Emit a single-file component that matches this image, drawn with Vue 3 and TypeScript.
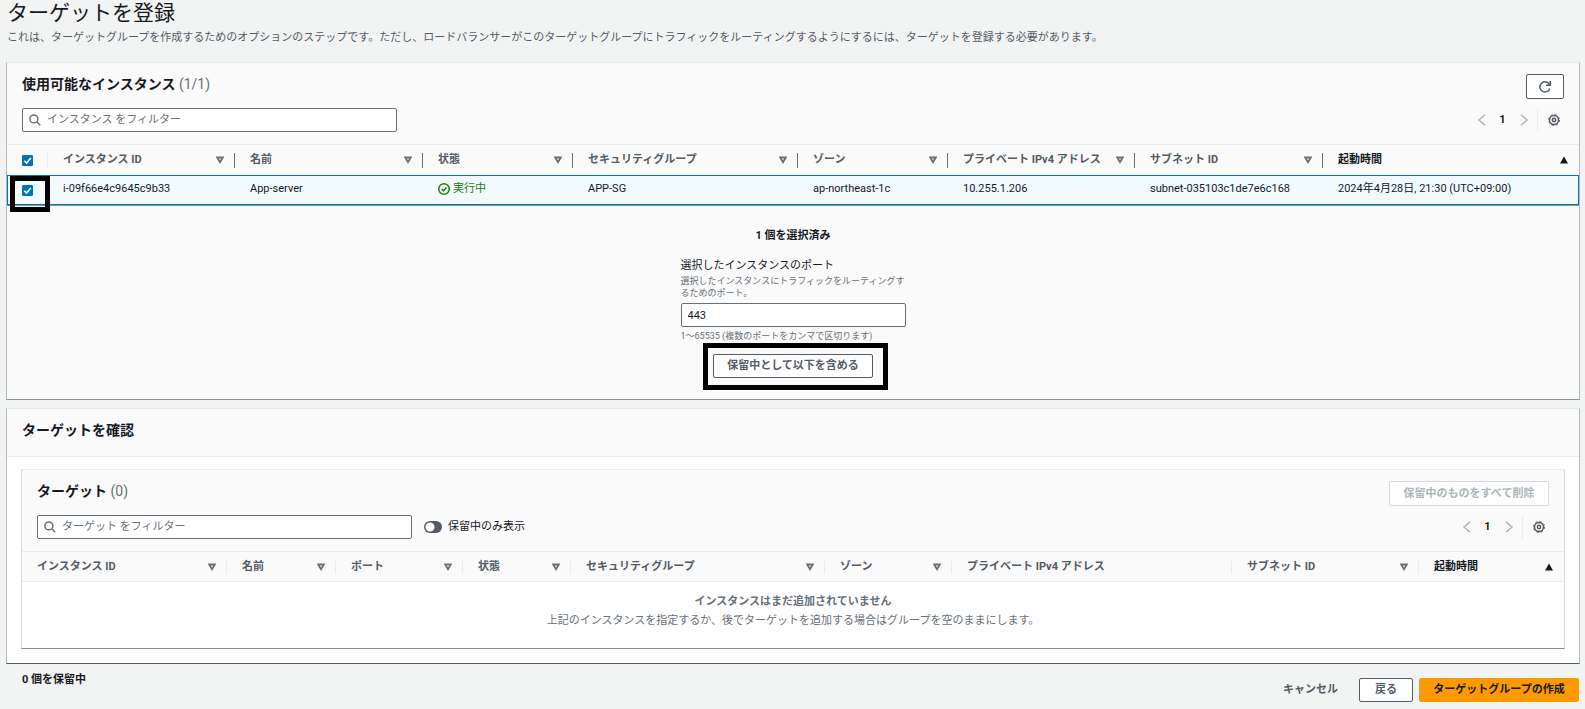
<script setup lang="ts">
import { ref } from 'vue'

interface Column {
  label: string
  width: number | null
  sort: 'none' | 'available' | 'ascending'
}

const instanceColumns: Column[] = [
  { label: 'インスタンス ID', width: 187, sort: 'available' },
  { label: '名前', width: 188, sort: 'available' },
  { label: '状態', width: 150, sort: 'available' },
  { label: 'セキュリティグループ', width: 225, sort: 'available' },
  { label: 'ゾーン', width: 150, sort: 'available' },
  { label: 'プライベート IPv4 アドレス', width: 187, sort: 'available' },
  { label: 'サブネット ID', width: 188, sort: 'available' },
  { label: '起動時間', width: null, sort: 'ascending' },
]

const targetColumns: Column[] = [
  { label: 'インスタンス ID', width: 205, sort: 'available' },
  { label: '名前', width: 109, sort: 'available' },
  { label: 'ポート', width: 127, sort: 'available' },
  { label: '状態', width: 108, sort: 'available' },
  { label: 'セキュリティグループ', width: 254, sort: 'available' },
  { label: 'ゾーン', width: 127, sort: 'available' },
  { label: 'プライベート IPv4 アドレス', width: 280, sort: 'none' },
  { label: 'サブネット ID', width: 187, sort: 'available' },
  { label: '起動時間', width: null, sort: 'ascending' },
]

const allSelected = ref(true)
const rowSelected = ref(true)
const pendingOnly = ref(false)
const instanceFilter = ref('')
const targetFilter = ref('')
const ports = ref('443')

const colStyle = (c: Column) => (c.width ? { width: `${c.width}px` } : {})
</script>

<template>
  <main class="page">
    <h1>ターゲットを登録</h1>
    <p class="lead">これは、ターゲットグループを作成するためのオプションのステップです。ただし、ロードバランサーがこのターゲットグループにトラフィックをルーティングするようにするには、ターゲットを登録する必要があります。</p>

    <section class="panel available">
      <header class="tools">
        <div class="tools-row">
          <h2>使用可能なインスタンス <span class="count">(1/1)</span></h2>
          <button type="button" class="btn refresh" aria-label="更新">
            <svg class="icon" viewBox="0 0 16 16"><path d="M14.4 10A6.8 6.8 0 1 1 13.2 3.6L14.6 5.4" /><path d="M15 0v5.6H9.4" /></svg>
          </button>
        </div>
        <div class="tools-row">
          <div class="search">
            <svg class="icon" viewBox="0 0 16 16"><circle cx="6.5" cy="6.5" r="5.3" /><path d="M10.4 10.4 15 15" /></svg>
            <input v-model="instanceFilter" type="text" placeholder="インスタンス をフィルター" aria-label="インスタンス をフィルター" />
          </div>
          <nav class="pager" aria-label="インスタンスのページ">
            <button type="button" class="arrow" disabled aria-label="前へ"><svg class="icon" viewBox="0 0 16 16"><path d="M12 1 4 8l8 7" /></svg></button>
            <button type="button" class="page-no">1</button>
            <button type="button" class="arrow" disabled aria-label="次へ"><svg class="icon" viewBox="0 0 16 16"><path d="m4 1 8 7-8 7" /></svg></button>
            <button type="button" class="gear" aria-label="設定">
              <svg class="icon" viewBox="0 0 16 16"><circle cx="8" cy="8" r="6" /><circle cx="8" cy="8" r="7.4" class="teeth" /><circle cx="8" cy="8" r="2.2" /></svg>
            </button>
          </nav>
        </div>
      </header>

      <table class="resizable">
        <colgroup>
          <col class="check-col" />
          <col v-for="c in instanceColumns" :key="c.label" :style="colStyle(c)" />
        </colgroup>
        <thead>
          <tr>
            <th class="check" scope="col"><input v-model="allSelected" type="checkbox" aria-label="すべて選択" /></th>
            <th v-for="c in instanceColumns" :key="c.label" scope="col" :class="c.sort">
              <div class="th">
                <span>{{ c.label }}</span>
                <svg v-if="c.sort !== 'none'" class="sort" viewBox="0 0 8 8"><path :d="c.sort === 'ascending' ? 'M0 7.5 4 0.5 8 7.5Z' : 'M1.2 1.5h5.6L4 6.2Z'" /></svg>
              </div>
            </th>
          </tr>
        </thead>
        <tbody>
          <tr class="selected">
            <td class="check">
              <input v-model="rowSelected" type="checkbox" aria-label="App-server を選択" />
              <span class="mark mark-check"></span>
            </td>
            <td>i-09f66e4c9645c9b33</td>
            <td>App-server</td>
            <td>
              <span class="status">
                <svg class="icon" viewBox="0 0 16 16"><circle cx="8" cy="8" r="7" /><path d="m5 8 2.3 2.5L11.3 6" /></svg>実行中
              </span>
            </td>
            <td>APP-SG</td>
            <td>ap-northeast-1c</td>
            <td>10.255.1.206</td>
            <td>subnet-035103c1de7e6c168</td>
            <td>2024年4月28日, 21:30 (UTC+09:00)</td>
          </tr>
        </tbody>
      </table>

      <div class="include">
        <strong>1 個を選択済み</strong>
        <div class="field">
          <label for="ports">選択したインスタンスのポート</label>
          <p class="hint">選択したインスタンスにトラフィックをルーティングするためのポート。</p>
          <input id="ports" v-model="ports" type="text" />
          <p class="hint constraint">1～65535 (複数のポートをカンマで区切ります)</p>
        </div>
        <div class="include-action">
          <button type="button" class="btn wide">保留中として以下を含める</button>
          <span class="mark mark-button"></span>
        </div>
      </div>
    </section>

    <section class="panel review">
      <header class="review-head"><h2>ターゲットを確認</h2></header>
      <div class="review-body">
        <section class="inner">
          <header class="tools">
            <div class="tools-row">
              <h2>ターゲット <span class="count">(0)</span></h2>
              <button type="button" class="btn wide tall" disabled>保留中のものをすべて削除</button>
            </div>
            <div class="tools-row">
              <div class="search">
                <svg class="icon" viewBox="0 0 16 16"><circle cx="6.5" cy="6.5" r="5.3" /><path d="M10.4 10.4 15 15" /></svg>
                <input v-model="targetFilter" type="text" placeholder="ターゲット をフィルター" aria-label="ターゲット をフィルター" />
              </div>
              <label class="toggle"><input v-model="pendingOnly" type="checkbox" role="switch" />保留中のみ表示</label>
              <nav class="pager" aria-label="ターゲットのページ">
                <button type="button" class="arrow" disabled aria-label="前へ"><svg class="icon" viewBox="0 0 16 16"><path d="M12 1 4 8l8 7" /></svg></button>
                <button type="button" class="page-no">1</button>
                <button type="button" class="arrow" disabled aria-label="次へ"><svg class="icon" viewBox="0 0 16 16"><path d="m4 1 8 7-8 7" /></svg></button>
                <button type="button" class="gear" aria-label="設定">
                  <svg class="icon" viewBox="0 0 16 16"><circle cx="8" cy="8" r="6" /><circle cx="8" cy="8" r="7.4" class="teeth" /><circle cx="8" cy="8" r="2.2" /></svg>
                </button>
              </nav>
            </div>
          </header>
          <table>
            <colgroup>
              <col v-for="c in targetColumns" :key="c.label" :style="colStyle(c)" />
            </colgroup>
            <thead>
              <tr>
                <th v-for="c in targetColumns" :key="c.label" scope="col" :class="c.sort">
                  <div class="th">
                    <span>{{ c.label }}</span>
                    <svg v-if="c.sort !== 'none'" class="sort" viewBox="0 0 8 8"><path :d="c.sort === 'ascending' ? 'M0 7.5 4 0.5 8 7.5Z' : 'M1.2 1.5h5.6L4 6.2Z'" /></svg>
                  </div>
                </th>
              </tr>
            </thead>
            <tbody>
              <tr>
                <td class="empty" :colspan="targetColumns.length">
                  <strong>インスタンスはまだ追加されていません</strong>
                  <p>上記のインスタンスを指定するか、後でターゲットを追加する場合はグループを空のままにします。</p>
                </td>
              </tr>
            </tbody>
          </table>
        </section>
      </div>
    </section>

    <footer class="actions">
      <strong>0 個を保留中</strong>
      <div class="buttons">
        <a href="#">キャンセル</a>
        <button type="button" class="btn back">戻る</button>
        <button type="button" class="btn wide primary">ターゲットグループの作成</button>
      </div>
    </footer>
  </main>
</template>

<style>
body {
  background: #f2f3f3;
}
</style>

<style scoped>
* {
  box-sizing: border-box;
}
.page {
  padding: 0 5px 3px 6px;
  color: #16191f;
  font: 11px/18px Roboto, "Noto Sans CJK JP", sans-serif;
}
button,
input {
  margin: 0;
  font: inherit;
}
h1,
h2,
p {
  margin: 0;
}
h1 {
  padding-left: 1px;
  font-size: 21px;
  font-weight: 400;
  line-height: 26px;
}
h2 {
  font-size: 14px;
  font-weight: 700;
  line-height: 20px;
}
.count {
  color: #687078;
  font-weight: 400;
}
.lead {
  margin: 3px 0 15px;
  padding-left: 1px;
  color: #545b64;
}
.panel {
  border: 1px solid #b4bcbf;
  border-top-color: #e6eaea;
  background: #fafafa;
}
.available {
  margin-bottom: 8px;
  border-bottom-color: #879596;
}
.review {
  border-bottom-color: #545b64;
}
.tools {
  display: flex;
  flex-direction: column;
  gap: 9px;
  padding: 11px 15px 12px;
}
.tools-row {
  display: flex;
  align-items: flex-start;
}
.tools-row .btn,
.pager {
  margin-left: auto;
}
.icon {
  display: block;
  flex: none;
  width: 12px;
  height: 12px;
  overflow: visible;
  fill: none;
  stroke: currentColor;
  stroke-width: 2;
}
.btn {
  display: inline-flex;
  align-items: center;
  justify-content: center;
  height: 24px;
  padding: 0;
  border: 1px solid #545b64;
  border-radius: 2px;
  background: #fff;
  color: #545b64;
  font-weight: 700;
  white-space: nowrap;
}
.btn:disabled {
  border-color: #d5dbdb;
  color: #aab7b8;
}
.refresh {
  width: 38px;
  height: 25px;
}
.wide {
  width: 160px;
}
.tall {
  height: 25px;
}
.back {
  width: 54px;
}
.primary {
  border-color: #ff9900;
  background: #ff9900;
  color: #16191f;
}
.search {
  display: flex;
  align-items: center;
  width: 375px;
  height: 24px;
  padding-left: 6px;
  border: 1px solid #687078;
  border-radius: 2px;
  background: #fff;
  color: #687078;
}
.search input {
  flex: 1;
  min-width: 0;
  padding: 0 6px;
  border: 0;
  outline: 0;
  background: none;
}
.search input::placeholder {
  color: #687078;
  opacity: 1;
}
.pager {
  display: flex;
  align-items: center;
  height: 24px;
}
.pager button {
  display: flex;
  align-items: center;
  justify-content: center;
  width: 21px;
  height: 24px;
  padding: 0;
  border: 0;
  background: none;
  color: #545b64;
}
.pager .arrow {
  color: #aab7b8;
}
.pager .page-no {
  color: #16191f;
  font-weight: 700;
}
.pager .gear {
  width: 27px;
  margin-left: 3px;
  padding-left: 5px;
  border-left: 1px solid #eaeded;
}
.teeth {
  stroke-width: 1.2;
  stroke-dasharray: 2.9 2.9;
}
table {
  width: 100%;
  border-collapse: separate;
  border-spacing: 0;
  table-layout: fixed;
}
.check-col {
  width: 41px;
}
th {
  height: 30px;
  padding: 0;
  border-top: 1px solid #eaeded;
  color: #545b64;
  font-weight: 700;
  text-align: left;
}
.resizable th {
  height: 31px;
}
th.ascending {
  color: #16191f;
}
.th {
  display: flex;
  align-items: center;
  justify-content: space-between;
  height: 15px;
  padding: 0 10px 0 15px;
  border-right: 1px solid #eaeded;
  white-space: nowrap;
}
.resizable .th {
  border-right-color: #687078;
}
th:last-child .th {
  border-right: 0;
  padding-right: 11px;
}
.sort {
  flex: none;
  width: 8px;
  height: 8px;
  fill: none;
  stroke: #687078;
  stroke-width: 1.8;
}
.ascending .sort {
  fill: #16191f;
  stroke: none;
}
th.check {
  background: linear-gradient(#eaeded, #eaeded) right center / 1px 15px no-repeat;
}
.check input {
  display: block;
  appearance: none;
  width: 11px;
  height: 11px;
  margin-left: 15px;
  border: 1px solid #687078;
  border-radius: 1px;
  background: #fff;
}
.check input:checked {
  border-color: #0073bb;
  background: #0073bb url("data:image/svg+xml,%3Csvg xmlns='http://www.w3.org/2000/svg' viewBox='0 0 9 9'%3E%3Cpath d='M1.3 4.7 3.6 7 7.8 2' fill='none' stroke='white' stroke-width='1.6'/%3E%3C/svg%3E") center / 9px 9px no-repeat;
}
.selected td {
  position: relative;
  height: 30px;
  padding: 0 0 2px 15px;
  border: solid #0073bb;
  border-width: 1px 0;
  background: #f1faff;
  white-space: nowrap;
}
.selected td.check {
  padding: 0;
  border-left-width: 1px;
}
.selected td.check input {
  margin-left: 14px;
}
.selected td:last-child {
  border-right-width: 1px;
}
.resizable {
  border-bottom: 1px solid #879596;
}
.status {
  display: flex;
  align-items: center;
  gap: 3px;
  color: #1d8102;
}
/* Emphasis frames laid over the controls they point at */
.mark {
  position: absolute;
  border: 5px solid #000;
  pointer-events: none;
}
.mark-check {
  z-index: 1;
  top: 0;
  left: 2px;
  width: 40px;
  height: 36px;
}
.mark-button {
  inset: -11px -15px -12px -10px;
}
.include {
  display: flex;
  flex-direction: column;
  align-items: center;
  padding: 21px 0 21px;
}
.field {
  width: 225px;
  margin-top: 12px;
}
.field label {
  display: block;
}
.hint {
  color: #687078;
  font-size: 9px;
  line-height: 12px;
}
.field input {
  display: block;
  width: 100%;
  height: 24px;
  margin: 4px 0 3px;
  padding: 0 6px;
  border: 1px solid #687078;
  border-radius: 2px;
  background: #fff;
  color: #16191f;
}
.constraint {
  white-space: nowrap;
}
.include-action {
  position: relative;
  display: flex;
  margin-top: 12px;
}
.review-head {
  padding: 11px 15px 16px;
  border-bottom: 1px solid #eaeded;
}
.review-body {
  padding: 12px 14px 14px;
  background: #fff;
}
.inner {
  border: 1px solid #d5dbdb;
  border-top-color: #eaeded;
  border-bottom-color: #879596;
  background: #fafafa;
}
.toggle {
  display: flex;
  align-items: center;
  gap: 6px;
  height: 24px;
  margin-left: 12px;
}
.toggle input {
  appearance: none;
  width: 18px;
  height: 12px;
  border-radius: 6px;
  background: radial-gradient(circle at 6px 6px, #fff 4px, #545b64 5px);
}
.empty {
  padding: 10px 0 18px;
  border-top: 1px solid #eaeded;
  background: #fff;
  color: #687078;
  line-height: 19px;
  text-align: center;
}
.actions {
  display: flex;
  justify-content: space-between;
  align-items: flex-start;
  padding: 7px 1px 0 16px;
}
.buttons {
  display: flex;
  align-items: center;
  gap: 6px;
  margin-top: 7px;
}
.buttons a {
  margin-right: 15px;
  color: #545b64;
  font-weight: 700;
  text-decoration: none;
}
</style>
